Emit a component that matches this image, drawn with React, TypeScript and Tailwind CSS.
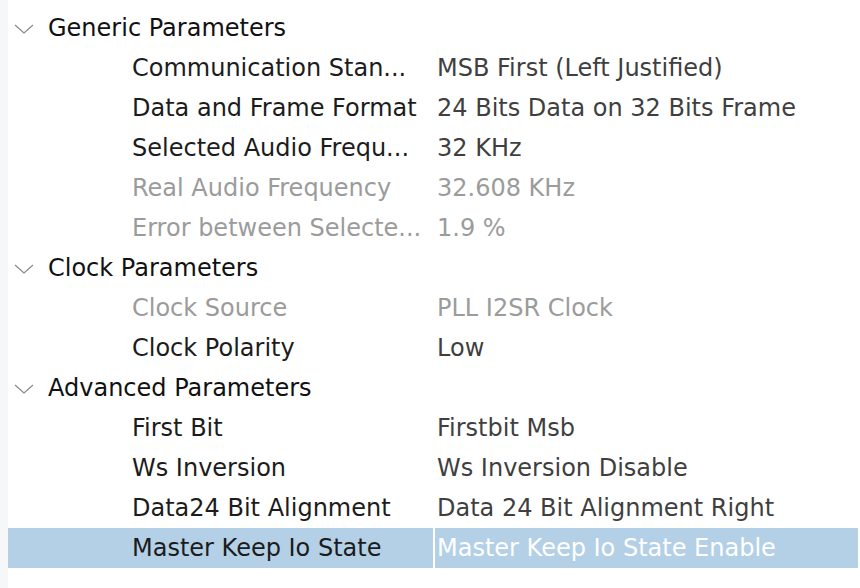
import React, { FC } from "react";

interface Param {
  name: string;
  value: string;
  disabled?: boolean;
  selected?: boolean;
}

interface Group {
  title: string;
  params: Param[];
}

const groups: Group[] = [
  {
    title: "Generic Parameters",
    params: [
      { name: "Communication Stan...", value: "MSB First (Left Justified)" },
      { name: "Data and Frame Format", value: "24 Bits Data on 32 Bits Frame" },
      { name: "Selected Audio Frequ...", value: "32 KHz" },
      { name: "Real Audio Frequency", value: "32.608 KHz", disabled: true },
      { name: "Error between Selecte...", value: "1.9 %", disabled: true },
    ],
  },
  {
    title: "Clock Parameters",
    params: [
      { name: "Clock Source", value: "PLL I2SR Clock", disabled: true },
      { name: "Clock Polarity", value: "Low" },
    ],
  },
  {
    title: "Advanced Parameters",
    params: [
      { name: "First Bit", value: "Firstbit Msb" },
      { name: "Ws Inversion", value: "Ws Inversion Disable" },
      { name: "Data24 Bit Alignment", value: "Data 24 Bit Alignment Right" },
      { name: "Master Keep Io State", value: "Master Keep Io State Enable", selected: true },
    ],
  },
];

const Chevron: FC = () => (
  <svg width="20" height="10" viewBox="0 0 20 10" className="mt-[2px] shrink-0">
    <path d="M1 1 L10 9 L19 1" fill="none" stroke="#8a8a8a" strokeWidth="1.3" />
  </svg>
);

const ParamRow: FC<{ p: Param }> = ({ p }) => {
  const bg = p.selected ? "bg-[#b3d0e7]" : "";
  const nameColor = p.disabled ? "text-[#9b9b9b]" : "text-[#1c1c1c]";
  const valueColor = p.selected
    ? "text-white"
    : p.disabled
    ? "text-[#9b9b9b]"
    : "text-[#3f3f3f]";
  return (
    <div className="flex h-10 items-center">
      <div className={`flex h-full w-[425px] items-center overflow-hidden pl-[124px] ${bg} ${nameColor}`}>
        <span className="whitespace-nowrap">{p.name}</span>
      </div>
      <div className="h-full w-[2px] bg-white" />
      <div className={`flex h-full flex-1 items-center pl-[2px] ${bg} ${valueColor}`}>
        <span className="whitespace-nowrap">{p.value}</span>
      </div>
    </div>
  );
};

const App: FC = () => {
  return (
    <div className="flex h-[588px] w-[860px] bg-white font-['DejaVu_Sans',sans-serif] text-[24px] leading-none">
      <div className="w-2 shrink-0 bg-[#f6f7f9]" />
      <div className="flex w-[850px] flex-col pt-[8px]">
        {groups.map((g) => (
          <div key={g.title} className="flex flex-col">
            <div className="flex h-10 items-center gap-[14px] pl-[6px] text-[#111]">
              <Chevron />
              <span className="whitespace-nowrap">{g.title}</span>
            </div>
            {g.params.map((p) => (
              <ParamRow key={p.name} p={p} />
            ))}
          </div>
        ))}
      </div>
    </div>
  );
};

export default App;
